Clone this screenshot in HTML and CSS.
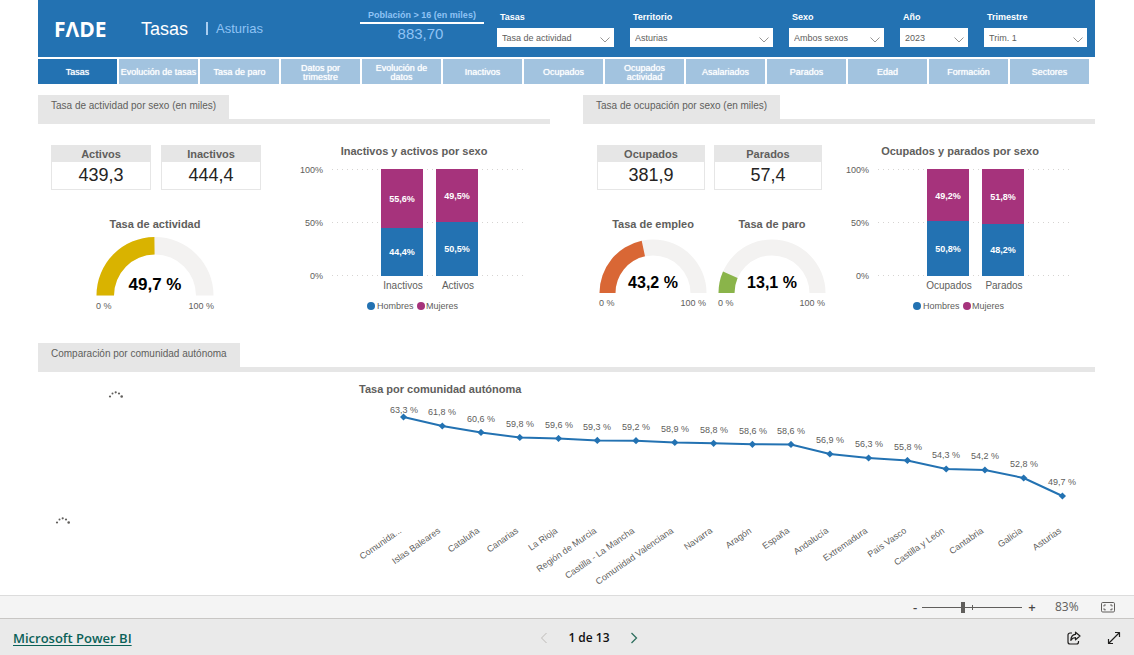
FILE: index.html
```html
<!DOCTYPE html>
<html lang="es">
<head>
<meta charset="utf-8">
<meta name="viewport" content="width=device-width, initial-scale=1">
<title>Tasas | Asturias</title>
<link rel="stylesheet" href="styles.css">
</head>
<body>
<main class="report">
  <header class="banner">
    <div class="brand">
      <span class="logo" role="img" aria-label="FADE">FΛDE</span>
      <h1 class="title">Tasas</h1>
      <span class="region">Asturias</span>
    </div>
    <div class="kpi">
      <span class="kpi-name">Población &gt; 16 (en miles)</span>
      <span class="kpi-value">883,70</span>
    </div>
    <form class="filters">
      <label class="filter"><span class="filter-name">Tasas</span>
        <span class="picker"><select><option>Tasa de actividad</option></select><svg class="chevron" width="10" height="6" viewBox="0 0 10 6"><path d="M.5.5 5 5 9.5.5"/></svg></span></label>
      <label class="filter"><span class="filter-name">Territorio</span>
        <span class="picker"><select><option>Asturias</option></select><svg class="chevron" width="10" height="6" viewBox="0 0 10 6"><path d="M.5.5 5 5 9.5.5"/></svg></span></label>
      <label class="filter"><span class="filter-name">Sexo</span>
        <span class="picker"><select><option>Ambos sexos</option></select><svg class="chevron" width="10" height="6" viewBox="0 0 10 6"><path d="M.5.5 5 5 9.5.5"/></svg></span></label>
      <label class="filter"><span class="filter-name">Año</span>
        <span class="picker"><select><option>2023</option></select><svg class="chevron" width="10" height="6" viewBox="0 0 10 6"><path d="M.5.5 5 5 9.5.5"/></svg></span></label>
      <label class="filter"><span class="filter-name">Trimestre</span>
        <span class="picker"><select><option>Trim. 1</option></select><svg class="chevron" width="10" height="6" viewBox="0 0 10 6"><path d="M.5.5 5 5 9.5.5"/></svg></span></label>
    </form>
  </header>

  <nav class="tabs">
    <button class="tab tab-active" type="button">Tasas</button>
    <button class="tab tab-long" type="button">Evolución de tasas</button>
    <button class="tab" type="button">Tasa de paro</button>
    <button class="tab" type="button">Datos por trimestre</button>
    <button class="tab" type="button">Evolución de datos</button>
    <button class="tab" type="button">Inactivos</button>
    <button class="tab" type="button">Ocupados</button>
    <button class="tab" type="button">Ocupados actividad</button>
    <button class="tab" type="button">Asalariados</button>
    <button class="tab" type="button">Parados</button>
    <button class="tab" type="button">Edad</button>
    <button class="tab" type="button">Formación</button>
    <button class="tab" type="button">Sectores</button>
  </nav>

  <div class="panels">
    <section class="panel">
      <div class="panel-head"><h2 class="panel-title">Tasa de actividad por sexo (en miles)</h2></div>
      <div class="panel-body">
        <div class="figures">
          <div class="cards">
            <div class="card"><h3 class="card-name">Activos</h3><p class="card-value">439,3</p></div>
            <div class="card"><h3 class="card-name">Inactivos</h3><p class="card-value">444,4</p></div>
          </div>
          <div class="gauges gauges-single">
            <div class="gauge">
              <h3 class="chart-title">Tasa de actividad</h3>
              <svg width="130" height="76" viewBox="0 0 130 76">
                <path class="track" d="M6.500 59.500A58.500 58.500 0 0 1 123.500 59.500H106A41 41 0 0 0 24 59.500Z"/>
                <path class="fill-gold" d="M6.500 59.500A58.500 58.500 0 0 1 64.400 1L64.600 18.500A41 41 0 0 0 24 59.500Z"/>
                <text class="gauge-value gauge-large" x="65" y="54">49,7 %</text>
                <text class="small" x="6" y="73">0 %</text>
                <text class="small end" x="124" y="73">100 %</text>
              </svg>
            </div>
          </div>
        </div>
        <svg class="bars" width="245" height="175" viewBox="0 0 245 175">
          <text class="svg-title mid" x="124" y="13">Inactivos y activos por sexo</text>
          <path class="grid" d="M42 27.500H237M42 80.500H237M42 133.500H237"/>
          <text class="small end" x="33" y="31">100%</text>
          <text class="small end" x="33" y="84">50%</text>
          <text class="small end" x="33" y="137">0%</text>
          <rect class="women" x="91" y="27" width="42" height="59"/>
          <rect class="men" x="91" y="86" width="42" height="48"/>
          <rect class="women" x="146" y="27" width="42" height="53"/>
          <rect class="men" x="146" y="80" width="42" height="54"/>
          <text class="bar-label" x="112" y="60">55,6%</text>
          <text class="bar-label" x="112" y="113">44,4%</text>
          <text class="bar-label" x="167" y="57">49,5%</text>
          <text class="bar-label" x="167" y="110">50,5%</text>
          <text class="category mid" x="113" y="147">Inactivos</text>
          <text class="category mid" x="168" y="147">Activos</text>
          <circle class="men" cx="81" cy="164" r="4"/>
          <text class="small" x="87" y="167">Hombres</text>
          <circle class="women" cx="131" cy="164" r="4"/>
          <text class="small" x="136" y="167">Mujeres</text>
        </svg>
      </div>
    </section>

    <section class="panel">
      <div class="panel-head"><h2 class="panel-title">Tasa de ocupación por sexo (en miles)</h2></div>
      <div class="panel-body">
        <div class="figures figures-pair">
          <div class="cards">
            <div class="card card-wide"><h3 class="card-name">Ocupados</h3><p class="card-value">381,9</p></div>
            <div class="card card-wide"><h3 class="card-name">Parados</h3><p class="card-value">57,4</p></div>
          </div>
          <div class="gauges">
            <div class="gauge">
              <h3 class="chart-title">Tasa de empleo</h3>
              <svg width="112" height="76" viewBox="0 0 112 76">
                <path class="track" d="M2.500 57A53.500 53.500 0 0 1 109.500 57H93.500A37.500 37.500 0 0 0 18.500 57Z"/>
                <path class="fill-orange" d="M2.500 57A53.500 53.500 0 0 1 44.700 4.700L48 20.300A37.500 37.500 0 0 0 18.500 57Z"/>
                <text class="gauge-value" x="56" y="52">43,2 %</text>
                <text class="small" x="2" y="70">0 %</text>
                <text class="small end" x="109" y="70">100 %</text>
              </svg>
            </div>
            <div class="gauge">
              <h3 class="chart-title">Tasa de paro</h3>
              <svg width="112" height="76" viewBox="0 0 112 76">
                <path class="track" d="M2.500 57A53.500 53.500 0 0 1 109.500 57H93.500A37.500 37.500 0 0 0 18.500 57Z"/>
                <path class="fill-green" d="M2.500 57A53.500 53.500 0 0 1 7 35.600L21.600 42A37.500 37.500 0 0 0 18.500 57Z"/>
                <text class="gauge-value" x="56" y="52">13,1 %</text>
                <text class="small" x="2" y="70">0 %</text>
                <text class="small end" x="109" y="70">100 %</text>
              </svg>
            </div>
          </div>
        </div>
        <svg class="bars" width="245" height="175" viewBox="0 0 245 175">
          <text class="svg-title mid" x="125" y="13">Ocupados y parados por sexo</text>
          <path class="grid" d="M43 27.500H238M43 80.500H238M43 133.500H238"/>
          <text class="small end" x="34" y="31">100%</text>
          <text class="small end" x="34" y="84">50%</text>
          <text class="small end" x="34" y="137">0%</text>
          <rect class="women" x="92" y="27" width="42" height="52"/>
          <rect class="men" x="92" y="79" width="42" height="55"/>
          <rect class="women" x="147" y="27" width="42" height="55"/>
          <rect class="men" x="147" y="82" width="42" height="52"/>
          <text class="bar-label" x="113" y="57">49,2%</text>
          <text class="bar-label" x="113" y="110">50,8%</text>
          <text class="bar-label" x="168" y="58">51,8%</text>
          <text class="bar-label" x="168" y="111">48,2%</text>
          <text class="category mid" x="114" y="147">Ocupados</text>
          <text class="category mid" x="169" y="147">Parados</text>
          <circle class="men" cx="82" cy="164" r="4"/>
          <text class="small" x="88" y="167">Hombres</text>
          <circle class="women" cx="132" cy="164" r="4"/>
          <text class="small" x="137" y="167">Mujeres</text>
        </svg>
      </div>
    </section>
  </div>

  <section class="comparison">
    <div class="panel-head"><h2 class="panel-title">Comparación por comunidad autónoma</h2></div>
    <div class="comparison-body">
      <div class="loading">
        <svg class="spinner spinner-map" width="16" height="10" viewBox="0 0 16 10"><circle cx="2" cy="6.500" r="1.100"/><circle cx="4.500" cy="3.500" r="1"/><circle cx="7.700" cy="2.300" r="1.100"/><circle cx="11" cy="3.500" r="1.100"/><circle cx="13.700" cy="6.500" r="1.300"/></svg>
        <svg class="spinner" width="16" height="10" viewBox="0 0 16 10"><circle cx="2" cy="6.500" r="1.100"/><circle cx="4.500" cy="3.500" r="1"/><circle cx="7.700" cy="2.300" r="1.100"/><circle cx="11" cy="3.500" r="1.100"/><circle cx="13.700" cy="6.500" r="1.300"/></svg>
      </div>
      <svg class="trend" viewBox="0 0 745 215">
        <defs><marker id="point" markerUnits="userSpaceOnUse" markerWidth="8" markerHeight="8" refX="4" refY="4"><path class="marker" d="M4 .4 7.600 4 4 7.600.4 4Z"/></marker></defs>
        <text class="svg-title" x="9" y="18">Tasa por comunidad autónoma</text>
        <polyline class="line" marker-start="url(#point)" marker-mid="url(#point)" marker-end="url(#point)" points="53.500,42 92.300,51 131,57.500 169.800,62.500 208.500,63.500 247.300,65.400 286,65.700 324.800,67.500 363.600,68.300 402.400,69.300 441,69.500 479.900,79 518.600,83 557.400,85.500 596.200,94 634.900,95 673.700,103 712.400,121"/>
        <g class="small mid">
          <text x="54" y="38">63,3 %</text><text x="92" y="40">61,8 %</text><text x="131" y="47">60,6 %</text>
          <text x="170" y="52">59,8 %</text><text x="209" y="53">59,6 %</text><text x="247" y="55">59,3 %</text>
          <text x="286" y="55">59,2 %</text><text x="325" y="57">58,9 %</text><text x="364" y="58">58,8 %</text>
          <text x="403" y="59">58,6 %</text><text x="441" y="59">58,6 %</text><text x="480" y="68">56,9 %</text>
          <text x="519" y="72">56,3 %</text><text x="558" y="75">55,8 %</text><text x="596" y="83">54,3 %</text>
          <text x="635" y="84">54,2 %</text><text x="674" y="92">52,8 %</text><text x="712" y="110">49,7 %</text>
        </g>
        <g class="small end">
          <text transform="translate(52 157) rotate(-35)">Comunida...</text>
          <text transform="translate(91 157) rotate(-35)">Islas Baleares</text>
          <text transform="translate(130 157) rotate(-35)">Cataluña</text>
          <text transform="translate(169 157) rotate(-35)">Canarias</text>
          <text transform="translate(208 157) rotate(-35)">La Rioja</text>
          <text transform="translate(247 157) rotate(-35)">Región de Murcia</text>
          <text transform="translate(285 157) rotate(-35)">Castilla - La Mancha</text>
          <text transform="translate(324 157) rotate(-35)">Comunidad Valenciana</text>
          <text transform="translate(363 157) rotate(-35)">Navarra</text>
          <text transform="translate(402 157) rotate(-35)">Aragón</text>
          <text transform="translate(440 157) rotate(-35)">España</text>
          <text transform="translate(479 157) rotate(-35)">Andalucía</text>
          <text transform="translate(518 157) rotate(-35)">Extremadura</text>
          <text transform="translate(557 157) rotate(-35)">País Vasco</text>
          <text transform="translate(595 157) rotate(-35)">Castilla y León</text>
          <text transform="translate(634 157) rotate(-35)">Cantabria</text>
          <text transform="translate(673 157) rotate(-35)">Galicia</text>
          <text transform="translate(712 157) rotate(-35)">Asturias</text>
        </g>
      </svg>
    </div>
  </section>
</main>

<div class="zoombar">
  <button class="zoom-step" type="button" aria-label="Alejar">-</button>
  <span class="zoom-track"><input class="zoom-range" type="range" min="0" max="100" value="41" aria-label="Zoom"><span class="zoom-tick"></span></span>
  <button class="zoom-step" type="button" aria-label="Acercar">+</button>
  <output class="zoom-value">83%</output>
  <button class="icon-button" type="button" aria-label="Ajustar a la página"><svg width="14" height="11" viewBox="0 0 14 11"><rect class="stroke-gray" x=".5" y=".5" width="13" height="9.500" rx="1.200"/><path class="stroke-gray" d="M3 4.500V3h1.800M9.200 3H11v1.500M11 6.300v1.500H9.200M4.800 7.800H3V6.300"/></svg></button>
</div>

<footer class="footer">
  <a class="product" href="#">Microsoft Power BI</a>
  <nav class="pager">
    <button class="icon-button" type="button" aria-label="Página anterior" disabled><svg width="8" height="12" viewBox="0 0 8 12"><path class="stroke-pale" d="M6.500 1 1.500 6l5 5"/></svg></button>
    <span class="page">1 de 13</span>
    <button class="icon-button" type="button" aria-label="Página siguiente"><svg width="8" height="12" viewBox="0 0 8 12"><path class="stroke-green" d="m1.500 1 5 5-5 5"/></svg></button>
  </nav>
  <div class="actions">
    <button class="icon-button" type="button" aria-label="Compartir"><svg width="14" height="14" viewBox="0 0 14 14"><path class="stroke-dark" d="M5 2H3a2 2 0 0 0-2 2v7a2 2 0 0 0 2 2h6.500a2 2 0 0 0 2-2v-1"/><path class="stroke-dark" d="M8.500 1.200 13 5 8.500 8.800V6.700C6.500 6.700 5 7.500 3.800 9.300 4 6 5.500 3.700 8.500 3.400Z"/></svg></button>
    <button class="icon-button" type="button" aria-label="Pantalla completa"><svg width="14" height="14" viewBox="0 0 14 14"><path class="stroke-dark" d="M1.500 12.500 12.500 1.500M8 1.500h4.500V6M1.500 8v4.500H6"/></svg></button>
  </div>
</footer>
</body>
</html>
```
FILE: styles.css
```css
* { box-sizing: border-box; }

body {
  margin: 0;
  min-height: 100vh;
  display: flex;
  flex-direction: column;
  background: #fff;
  color: #605e5c;
  font-family: "Liberation Sans", Arial, sans-serif;
  font-size: 9px;
}

h1, h2, h3, p { margin: 0; }
button, select { font-family: inherit; }
svg { display: block; }

.report { flex: 1; padding: 0 39px 4px 38px; }

/* Banner */
.banner {
  display: grid;
  grid-template-columns: minmax(0, 309fr) minmax(0, 124fr) minmax(0, 590fr);
  column-gap: 13px;
  height: 57px;
  padding-right: 8px;
  background: #2372b2;
}
.brand { display: flex; align-items: center; padding-left: 16px; }
.logo { width: 56px; color: #fff; font-family: "Open Sans", sans-serif; font-weight: 700; font-size: 21px; line-height: 30px; }
.title { margin-left: 31px; color: #fff; font-size: 18px; font-weight: 400; line-height: 20px; }
.region {
  margin-left: 18px;
  padding-left: 8px;
  border-left: 2px solid #a9cdf0;
  color: #8fc3f5;
  font-size: 13px;
  line-height: 13px;
}
.kpi { display: flex; flex-direction: column; padding-top: 9px; text-align: center; color: #8fc3f5; }
.kpi-name { padding-bottom: 1px; border-bottom: 2px solid #fff; font-size: 9px; line-height: 12px; font-weight: 700; white-space: nowrap; }
.kpi-value { padding-right: 3px; font-size: 15px; line-height: 20px; }
.filters {
  display: grid;
  grid-template-columns: minmax(0, 117fr) minmax(0, 143fr) minmax(0, 95fr) minmax(0, 68fr) minmax(0, 103fr);
  column-gap: 16px;
  padding-top: 11px;
}
.filter { display: flex; flex-direction: column; gap: 5px; }
.filter-name { padding-left: 3px; color: #fff; font-size: 9px; line-height: 12px; font-weight: 700; }
.picker { display: grid; grid-template-columns: minmax(0, 1fr) 14px; align-items: center; }
.picker select {
  grid-area: 1 / 1 / 2 / 3;
  appearance: none;
  width: 100%;
  height: 19px;
  padding: 0 16px 0 5px;
  border: 0;
  border-radius: 0;
  background: #fff;
  color: #605e5c;
  font-size: 9px;
}
.chevron { grid-area: 1 / 2; margin-top: 4px; fill: none; stroke: #979593; pointer-events: none; }

/* Page tabs */
.tabs {
  display: grid;
  grid-template-columns: repeat(13, minmax(0, 1fr));
  gap: 2px;
  padding: 2px 6px 0 0;
}
.tab {
  min-height: 25px;
  padding: 2px 13px 0;
  border: 0;
  background: #a2c3df;
  color: #fff;
  font-size: 9px;
  line-height: 9px;
  text-shadow: 0 0 1px #fff;
}
.tab-long { padding: 2px 0 0; }
.tab-active { background: #2372b2; }

/* Section heads */
.panels { display: grid; grid-template-columns: repeat(2, minmax(0, 1fr)); gap: 33px; margin-top: 11px; }
.panel-head { display: flex; border-bottom: 5px solid #e6e6e6; }
.panel-title {
  padding: 3px 13px 5px;
  background: #e6e6e6;
  font-size: 10px;
  line-height: 16px;
  font-weight: 400;
}
.panel-body { display: grid; grid-template-columns: minmax(0, 252fr) minmax(0, 260fr); padding-top: 18px; }
.figures { padding: 3px 0 0 13px; }
.figures-pair { padding-left: 14px; }

/* Cards */
.cards { display: flex; gap: 10px; }
.figures-pair .cards { gap: 9px; }
.card { width: 100px; border: 1px solid #e6e6e6; text-align: center; }
.card-wide { width: 108px; }
.card-name { background: #e6e6e6; font-size: 11px; line-height: 16px; }
.card-value { color: #252423; font-size: 18px; line-height: 27px; }

/* Gauges and bar charts */
.gauges { display: flex; gap: 7px; margin-top: 26px; }
.gauges-single { padding-left: 39px; }
.gauge { display: flex; flex-direction: column; gap: 4px; text-align: center; }
.chart-title { font-size: 11px; line-height: 16px; }
.track { fill: #f3f2f1; }
.fill-gold { fill: #d9b300; }
.fill-orange { fill: #d96735; }
.fill-green { fill: #8ab44a; }
.gauge-value { fill: #000; font-size: 16px; font-weight: 700; text-anchor: middle; }
.gauge-large { font-size: 17px; }
.small { fill: #605e5c; font-size: 9px; }
.category { fill: #605e5c; font-size: 10px; }
.svg-title { fill: #605e5c; font-size: 11px; font-weight: 700; }
.mid { text-anchor: middle; }
.end { text-anchor: end; }
.bar-label { fill: #fff; font-size: 9px; font-weight: 700; text-anchor: middle; }
.men { fill: #2372b2; }
.women { fill: #a6337c; }
.grid { fill: none; stroke: #d6d4d2; stroke-dasharray: 1 4; }

/* Comparison */
.comparison { margin-top: 26px; }
.comparison-body { display: grid; grid-template-columns: minmax(0, 312fr) minmax(0, 745fr); padding-top: 3px; }
.loading { display: flex; flex-direction: column; gap: 116px; padding: 15px 0 0 17px; }
.spinner { fill: #605e5c; }
.spinner-map { margin-left: 53px; }
.trend { width: 100%; }
.line { fill: none; stroke: #2372b2; stroke-width: 2; }
.marker { fill: #2372b2; }

/* Zoom bar */
.zoombar {
  display: flex;
  align-items: center;
  justify-content: flex-end;
  height: 23px;
  padding-right: 19px;
  border-top: 1px solid #dcdcdc;
  background: #f4f4f4;
  color: #605e5c;
  font-family: "Open Sans", "Noto Sans", sans-serif;
}
.zoom-step { width: 10px; padding: 0; border: 0; background: none; color: #484644; font-size: 13px; font-weight: 600; line-height: 16px; }
.zoom-track { display: grid; align-items: center; width: 100px; margin: 0 5px 0 2px; }
.zoom-range { grid-area: 1 / 1; appearance: none; width: 100%; height: 12px; margin: 0; background: linear-gradient(#605e5c, #605e5c) center / 100% 1px no-repeat; }
.zoom-range::-webkit-slider-thumb { appearance: none; width: 4px; height: 11px; background: #605e5c; }
.zoom-tick { grid-area: 1 / 1; justify-self: center; width: 1px; height: 5px; background: #605e5c; }
.zoom-value { width: 42px; margin: 0 22px 0 0; padding-left: 18px; font-size: 12px; line-height: 16px; }

/* Footer */
.footer {
  display: grid;
  grid-template-columns: 1fr auto 1fr;
  align-items: center;
  height: 37px;
  padding: 1px 13px 0;
  border-top: 1px solid #c8c6c4;
  background: #eaeaea;
  font-family: "Open Sans", "Noto Sans", sans-serif;
}
.product { color: #0b6158; font-size: 13px; font-weight: 600; line-height: 18px; text-underline-offset: 2px; }
.pager { display: flex; align-items: center; gap: 20px; padding-left: 44px; }
.page { color: #111; font-size: 12px; font-weight: 600; line-height: 16px; }
.actions { display: flex; justify-content: flex-end; gap: 26px; }
.icon-button { padding: 0; border: 0; background: none; }
.stroke-gray { fill: none; stroke: #605e5c; }
.stroke-pale { fill: none; stroke: #bebbb8; }
.stroke-green { fill: none; stroke: #2f6f5f; stroke-width: 1.3; }
.stroke-dark { fill: none; stroke: #201f1e; stroke-width: 1.2; stroke-linejoin: round; }
```
